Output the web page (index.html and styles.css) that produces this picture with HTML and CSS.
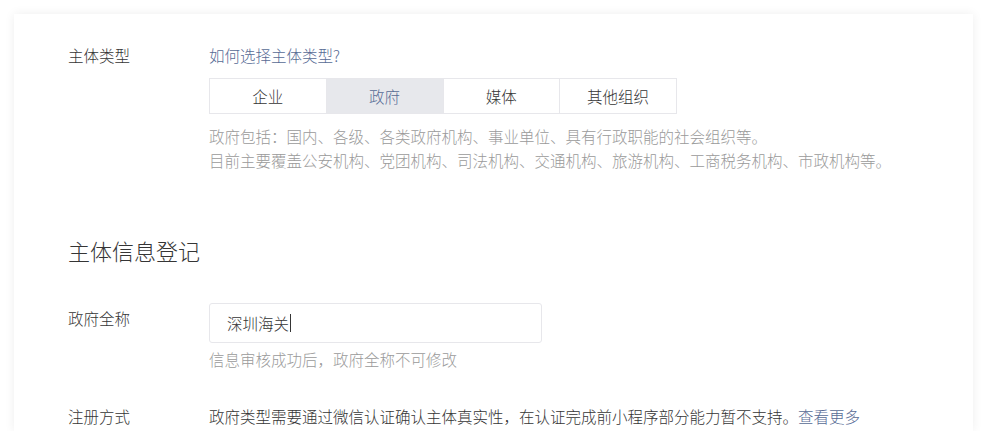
FILE: index.html
```html
<!DOCTYPE html>
<html lang="zh-CN">
<head>
<meta charset="utf-8">
<title>主体信息登记</title>
<link rel="stylesheet" href="styles.css">
</head>
<body>
<div class="card">
  <div class="row">
    <div class="label">主体类型</div>
    <div class="field">
      <a class="link" href="#">如何选择主体类型?</a>
      <div class="segments">
        <div class="seg">企业</div>
        <div class="seg seg-active">政府</div>
        <div class="seg">媒体</div>
        <div class="seg">其他组织</div>
      </div>
      <p class="tips tips-top">政府包括：国内、各级、各类政府机构、事业单位、具有行政职能的社会组织等。<br>目前主要覆盖公安机构、党团机构、司法机构、交通机构、旅游机构、工商税务机构、市政机构等。</p>
    </div>
  </div>

  <h2 class="section-title">主体信息登记</h2>

  <div class="row row-input">
    <div class="label label-input">政府全称</div>
    <div class="field">
      <div class="input"><span class="input-text">深圳海关</span><span class="caret"></span></div>
      <p class="tips tips-input">信息审核成功后，政府全称不可修改</p>
    </div>
  </div>

  <div class="row row-reg">
    <div class="label">注册方式</div>
    <div class="field">
      <p class="desc">政府类型需要通过微信认证确认主体真实性，在认证完成前小程序部分能力暂不支持。<a class="link" href="#">查看更多</a></p>
    </div>
  </div>
</div>
</body>
</html>
```

FILE: styles.css
```css
html, body {
  margin: 0;
  padding: 0;
  background: #ffffff;
}
body {
  font-family: "Noto Sans CJK SC", "Noto Sans", sans-serif;
  font-size: 15.5px;
  font-weight: 300;
  color: #353535;
  overflow: hidden;
  height: 431px;
}
.card {
  margin: 14px 15px 0 14px;
  padding: 29px 54px 0;
  background: #fff;
  box-shadow: 0 0 10px rgba(0, 0, 0, 0.07);
  height: 417px;
  box-sizing: border-box;
  overflow: hidden;
}
.row {
  display: flex;
}
.label {
  width: 141px;
  flex: none;
  line-height: 24px;
  color: #353535;
}
.field {
  flex: 1;
}
.link {
  color: #576b95;
  text-decoration: none;
  line-height: 24px;
}
.segments {
  display: flex;
  margin-top: 11px;
  width: 468px;
  border: 1px solid #e7e7eb;
  box-sizing: border-box;
  height: 36px;
}
.seg {
  flex: 1;
  text-align: center;
  line-height: 34px;
  border-left: 1px solid #e7e7eb;
  color: #353535;
}
.seg:first-child {
  border-left: none;
}
.seg-active {
  background: #e7e8ec;
  color: #576b95;
}
.tips {
  margin: 0;
  color: #9a9a9a;
  line-height: 24px;
}
.tips-top {
  margin-top: 10px;
}
.section-title {
  margin: 63px 0 0;
  font-weight: 300;
  font-size: 22px;
  line-height: 30px;
  color: #353535;
}
.row-input {
  margin-top: 38px;
}
.label-input {
  margin-top: 3px;
}
.input {
  width: 333px;
  height: 40px;
  box-sizing: border-box;
  border: 1px solid #e7e7eb;
  border-radius: 3px;
  padding: 0 16px 0 17px;
  display: flex;
  align-items: center;
  color: #353535;
}
.input-text {
  line-height: 24px;
}
.caret {
  display: inline-block;
  width: 1px;
  height: 18px;
  background: #353535;
  margin-left: 1px;
}
.tips-input {
  margin-top: 4px;
}
.row-reg {
  margin-top: 33px;
}
.desc {
  margin: 0;
  line-height: 24px;
}
```
